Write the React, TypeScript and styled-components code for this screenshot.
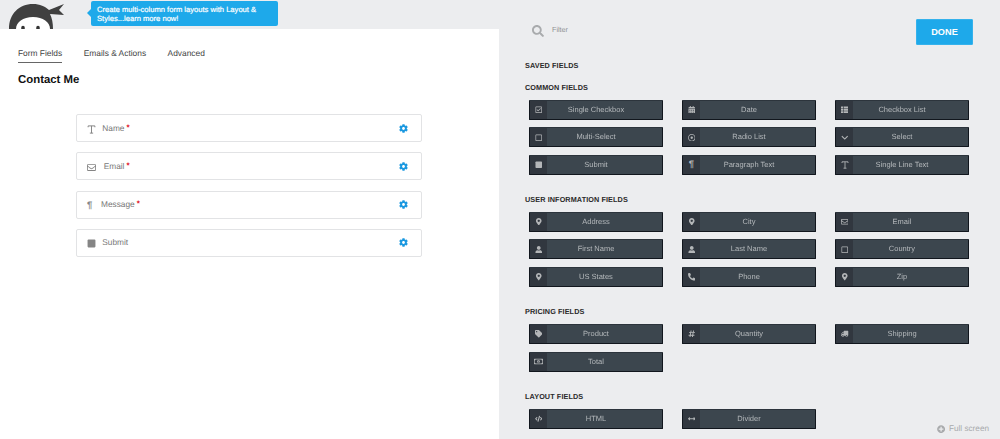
import React from "react";
import styled, { createGlobalStyle } from "styled-components";
import {
  FaRegCheckSquare, FaCalendarAlt, FaThList, FaRegSquare, FaRegDotCircle, FaChevronDown, FaStop,
  FaMapMarkerAlt, FaRegEnvelope, FaUser, FaPhoneAlt, FaTag, FaHashtag, FaTruck,
  FaRegMoneyBillAlt, FaCode, FaArrowsAltH, FaCog, FaSearch, FaPlusCircle,
} from "react-icons/fa";

const Global = createGlobalStyle`
  html, body { margin: 0; padding: 0; background: #ecedef; overflow: hidden; }
  body { font-family: "Liberation Sans", Arial, sans-serif; text-rendering: geometricPrecision; }
`;

const Page = styled.div`
  display: flex;
  width: 1000px;
  height: 439px;
  overflow: hidden;
  background: #ecedef;
`;

const Builder = styled.main`
  width: 499px;
  display: flex;
  flex-direction: column;
`;

const TopBar = styled.header`
  height: 29px;
  display: flex;
  align-items: flex-start;
  overflow: hidden;
`;

const Logo = styled.svg`
  width: 66px;
  height: 29px;
  flex: none;
`;

const Bubble = styled.div`
  position: relative;
  margin: 1px 0 0 25px;
  width: 187px;
  height: 25px;
  box-sizing: border-box;
  padding: 3.5px 0 0 6px;
  background: #1ea9ea;
  border-radius: 2px;
  color: #fff;
  font-size: 7.6px;
  line-height: 9.5px;
  white-space: nowrap;
  -webkit-text-stroke: 0.2px #fff;
  &::before {
    content: "";
    position: absolute;
    left: -4px;
    top: 8px;
    border-style: solid;
    border-width: 4px 4px 4px 0;
    border-color: transparent #1ea9ea transparent transparent;
  }
`;

const Panel = styled.div`
  flex: 1;
  background: #fff;
  padding: 0 18px;
`;

const Tabs = styled.nav`
  display: flex;
  gap: 21.5px;
  padding-top: 18px;
`;

const Tab = styled.span<{ $active?: boolean }>`
  display: block;
  height: 14px;
  padding-bottom: 1px;
  font-size: 8.4px;
  line-height: 12px;
  color: #444;
  border-bottom: 1px solid ${(p) => (p.$active ? "#666" : "transparent")};
`;

const Title = styled.h1`
  margin: 10px 0 0;
  font-size: 11.4px;
  line-height: 14px;
  font-weight: bold;
  color: #111;
`;

const FieldList = styled.div`
  margin: 27px 0 0 58px;
  width: 346px;
  display: flex;
  flex-direction: column;
  gap: 10.3px;
`;

const FieldCard = styled.div`
  height: 28px;
  box-sizing: border-box;
  display: flex;
  align-items: center;
  padding: 0 13px 0 10px;
  background: #fff;
  border: 1px solid #e2e3e5;
  border-radius: 2px;
`;

const FieldIcon = styled.span<{ $w: number }>`
  width: ${(p) => p.$w}px;
  flex: none;
  display: flex;
  align-items: center;
  color: #858585;
  font-size: 9px;
  padding-top: 2px;
`;

const Pilcrow = styled.span`
  font-size: 9.5px;
  line-height: 10px;
  font-weight: bold;
  color: inherit;
`;

const FieldName = styled.span`
  font-size: 8.3px;
  line-height: 12px;
  margin-top: -1px;
  color: #777;
  flex: 1;
`;

const Required = styled.span`
  color: #e0101e;
  font-size: 8px;
  font-weight: bold;
  margin-left: 2px;
  vertical-align: 1px;
`;

const Gear = styled(FaCog)`
  color: #1a98e0;
  font-size: 9px;
`;

const Sidebar = styled.aside`
  position: relative;
  flex: 1;
  padding: 19px 27px 0 26px;
`;

const SideHead = styled.div`
  display: flex;
  justify-content: space-between;
  height: 26px;
  margin-bottom: 15.5px;
`;

const Filter = styled.div`
  display: flex;
  gap: 8px;
  align-items: flex-start;
  padding: 6px 0 0 7px;
  color: #8f9193;
  font-size: 7.2px;
  line-height: 10px;
`;

const SearchIcon = styled(FaSearch)`
  font-size: 12px;
  color: #a9abad;
`;

const Done = styled.button`
  width: 57px;
  height: 26px;
  padding: 0;
  border: 1px solid #35b2ec;
  border-radius: 1px;
  background: #1ea9ea;
  color: #fff;
  font: bold 9.2px "Liberation Sans", Arial, sans-serif;
`;

const Section = styled.section<{ $after: number }>`
  margin-bottom: ${(p) => p.$after}px;
`;

const Heading = styled.h2<{ $tight?: boolean }>`
  margin: 0 0 ${(p) => (p.$tight ? 0 : 7)}px;
  height: 10px;
  font-size: 7.25px;
  line-height: 10px;
  font-weight: bold;
  letter-spacing: 0.1px;
  color: #2a2a2a;
`;

const ButtonGrid = styled.div`
  display: grid;
  grid-template-columns: repeat(3, 134px);
  grid-auto-rows: 20px;
  column-gap: 19px;
  row-gap: 7.75px;
  margin-left: 4px;
`;

const FieldButton = styled.div`
  display: flex;
  box-sizing: border-box;
  background: #3c464e;
  border: 1px solid #11161d;
  border-top-color: #2c343c;
  border-radius: 1px;
  overflow: hidden;
`;

const ButtonIcon = styled.span`
  width: 17px;
  flex: none;
  display: flex;
  align-items: center;
  justify-content: center;
  background: #31373f;
  color: #b4b6b8;
  font-size: 7.5px;
`;

const ButtonLabel = styled.span`
  flex: 1;
  padding-right: 17px;
  text-align: center;
  color: #b4b8bb;
  font-size: 7.5px;
  line-height: 18.6px;
  will-change: transform;
`;

const FullScreen = styled.div`
  position: absolute;
  right: 11px;
  bottom: 4px;
  display: flex;
  align-items: center;
  gap: 4px;
  color: #a8aaac;
  font-size: 8.2px;
  line-height: 12px;
`;

const CursorIcon = ({ size = 9 }: { size?: number }) => (
  <svg width={size} height={size} viewBox="0 0 12 12" fill="none" stroke="currentColor" strokeWidth="1.3">
    <path d="M1.5 3V1.2h9V3M6 1.2v9.6M3.800 10.8h4.400" />
  </svg>
);

type Item = { label: string; icon: React.ReactNode };
const pin = <FaMapMarkerAlt />;
const user = <FaUser />;

const common: Item[] = [
  { label: "Single Checkbox", icon: <FaRegCheckSquare /> },
  { label: "Date", icon: <FaCalendarAlt /> },
  { label: "Checkbox List", icon: <FaThList /> },
  { label: "Multi-Select", icon: <FaRegSquare /> },
  { label: "Radio List", icon: <FaRegDotCircle /> },
  { label: "Select", icon: <FaChevronDown /> },
  { label: "Submit", icon: <FaStop /> },
  { label: "Paragraph Text", icon: <Pilcrow>¶</Pilcrow> },
  { label: "Single Line Text", icon: <CursorIcon size={8} /> },
];
const userInfo: Item[] = [
  { label: "Address", icon: pin },
  { label: "City", icon: pin },
  { label: "Email", icon: <FaRegEnvelope /> },
  { label: "First Name", icon: user },
  { label: "Last Name", icon: user },
  { label: "Country", icon: <FaRegSquare /> },
  { label: "US States", icon: pin },
  { label: "Phone", icon: <FaPhoneAlt /> },
  { label: "Zip", icon: pin },
];
const pricing: Item[] = [
  { label: "Product", icon: <FaTag /> },
  { label: "Quantity", icon: <FaHashtag /> },
  { label: "Shipping", icon: <FaTruck style={{ transform: "scaleX(-1)" }} /> },
  { label: "Total", icon: <FaRegMoneyBillAlt style={{ fontSize: 9 }} /> },
];
const layout: Item[] = [
  { label: "HTML", icon: <FaCode /> },
  { label: "Divider", icon: <FaArrowsAltH /> },
];

const fields = [
  { name: "Name", req: true, w: 15.300, icon: <CursorIcon /> },
  { name: "Email", req: true, w: 16.700, icon: <FaRegEnvelope /> },
  { name: "Message", req: true, w: 14, icon: <Pilcrow>¶</Pilcrow> },
  { name: "Submit", req: false, w: 15.300, icon: <FaStop /> },
];

const Buttons = ({ items }: { items: Item[] }) => (
  <ButtonGrid>
    {items.map((it) => (
      <FieldButton key={it.label}>
        <ButtonIcon>{it.icon}</ButtonIcon>
        <ButtonLabel>{it.label}</ButtonLabel>
      </FieldButton>
    ))}
  </ButtonGrid>
);

export default function App() {
  return (
    <Page>
      <Global />
      <Builder>
        <TopBar>
          <Logo viewBox="0 0 66 29">
            <path d="M9 29C9 14 19 4 33 4c7 0 12 2.500 16 6l15-6-5 6 5 5-14-1c2 4 3 9 3 15z" fill="#404040" />
            <path d="M16 29c0-7 7-12 17-12s17 5 17 12z" fill="#fff" />
            <ellipse cx="23" cy="28" rx="1.800" ry="2.200" fill="#333" />
            <ellipse cx="38" cy="28" rx="1.800" ry="2.200" fill="#333" />
          </Logo>
          <Bubble>
            Create multi-column form layouts with Layout &amp;
            <br />
            Styles...learn more now!
          </Bubble>
        </TopBar>
        <Panel>
          <Tabs>
            <Tab $active>Form Fields</Tab>
            <Tab>Emails &amp; Actions</Tab>
            <Tab>Advanced</Tab>
          </Tabs>
          <Title>Contact Me</Title>
          <FieldList>
            {fields.map((f) => (
              <FieldCard key={f.name}>
                <FieldIcon $w={f.w}>{f.icon}</FieldIcon>
                <FieldName>
                  {f.name}
                  {f.req && <Required>*</Required>}
                </FieldName>
                <Gear />
              </FieldCard>
            ))}
          </FieldList>
        </Panel>
      </Builder>
      <Sidebar>
        <SideHead>
          <Filter>
            <SearchIcon />
            <span>Filter</span>
          </Filter>
          <Done>DONE</Done>
        </SideHead>
        <Section $after={12}>
          <Heading $tight>SAVED FIELDS</Heading>
        </Section>
        <Section $after={19.5}>
          <Heading>COMMON FIELDS</Heading>
          <Buttons items={common} />
        </Section>
        <Section $after={20}>
          <Heading>USER INFORMATION FIELDS</Heading>
          <Buttons items={userInfo} />
        </Section>
        <Section $after={20}>
          <Heading>PRICING FIELDS</Heading>
          <Buttons items={pricing} />
        </Section>
        <Section $after={0}>
          <Heading>LAYOUT FIELDS</Heading>
          <Buttons items={layout} />
        </Section>
        <FullScreen>
          <FaPlusCircle />
          <span>Full screen</span>
        </FullScreen>
      </Sidebar>
    </Page>
  );
}
